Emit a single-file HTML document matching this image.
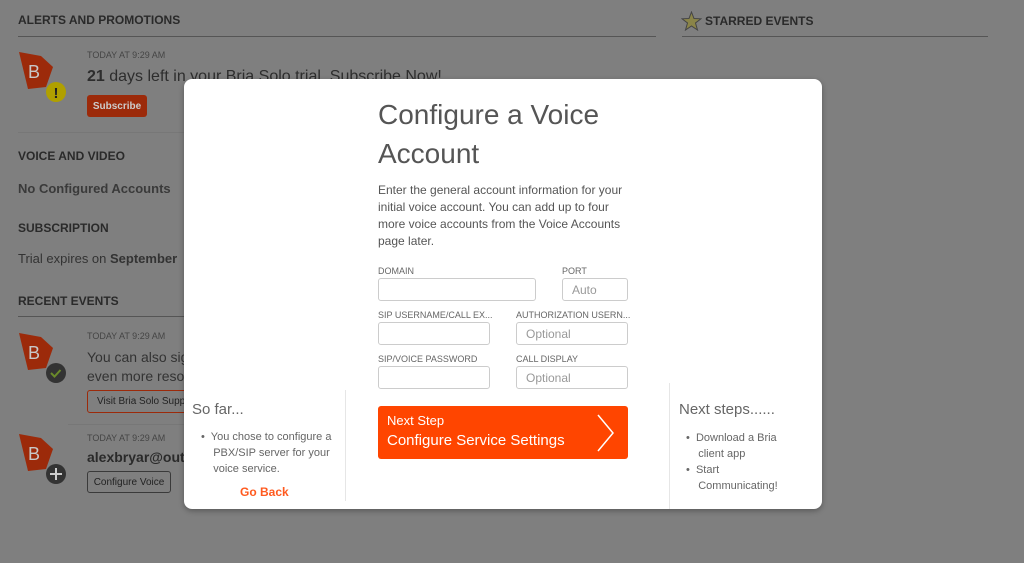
<!DOCTYPE html>
<html><head><meta charset="utf-8"><style>
*{margin:0;padding:0;box-sizing:border-box}
body{width:1024px;height:563px;background:#7f7f7f;font-family:"Liberation Sans",Arial,sans-serif;position:relative;overflow:hidden;color:#2d2d2d}
.a{position:absolute;white-space:nowrap}
.h{font-size:12px;font-weight:bold;color:#2a2a2a}
.line{position:absolute;height:1px;background:#555}
.ts{font-size:9px;color:#454545}
.btn{position:absolute;border:1px solid #3a3a3a;border-radius:3px;font-size:10px;color:#222;display:flex;align-items:center;justify-content:center;white-space:nowrap;overflow:hidden}
.modal{position:absolute;left:184px;top:79px;width:638px;height:430px;background:#fff;border-radius:8px;box-shadow:0 2px 6px rgba(0,0,0,.3)}
.m{position:absolute;white-space:nowrap}
.lbl{font-size:9px;color:#666}
.in{position:absolute;border:1px solid #ccc;border-radius:3px;height:23px;font-size:12px;color:#999;padding:4px 0 0 9px}
</style></head><body>
<div class="a h" style="left:18px;top:13px">ALERTS AND PROMOTIONS</div>
<div class="line" style="left:18px;top:36px;width:638px"></div>
<svg class="a" style="left:681px;top:11px" width="21" height="20" viewBox="0 0 21 20"><polygon points="10.5,1 13,7.5 20,7.8 14.5,12 16.5,19 10.5,15 4.5,19 6.5,12 1,7.8 8,7.5" fill="#8a8448" stroke="#444" stroke-width="1"/></svg>
<div class="a h" style="left:705px;top:14px">STARRED EVENTS</div>
<div class="line" style="left:682px;top:36px;width:306px"></div>

<svg class="a" style="left:16px;top:50px" width="54" height="54"><polygon points="3,2 25,6 37,17 30,37 12,39" fill="#9c2a0a"/><text x="12" y="28" font-family="Liberation Sans" font-size="18" fill="#c8c8c8">B</text><circle cx="40" cy="42" r="10" fill="#b0a000"/><text x="37.5" y="48" font-family="Liberation Sans" font-weight="bold" font-size="15" fill="#222">!</text></svg>
<div class="a ts" style="left:87px;top:50px">TODAY AT 9:29 AM</div>
<div class="a" style="left:87px;top:68px;font-size:16px;color:#2d2d2d"><b>21</b> days left in your Bria Solo trial. Subscribe Now!</div>
<div class="a" style="left:87px;top:95px;width:60px;height:22px;background:#9c2a0a;border-radius:3px;color:#ccc;font-size:10px;font-weight:bold;display:flex;align-items:center;justify-content:center">Subscribe</div>
<div class="line" style="left:18px;top:132px;width:170px;background:#777"></div>
<div class="a h" style="left:18px;top:149px">VOICE AND VIDEO</div>
<div class="a" style="left:18px;top:181px;font-size:13px;font-weight:bold;color:#3a3a3a">No Configured Accounts</div>
<div class="a h" style="left:18px;top:221px">SUBSCRIPTION</div>
<div class="a" style="left:18px;top:251px;font-size:13px;color:#333">Trial expires on <b>September</b></div>
<div class="a h" style="left:18px;top:294px">RECENT EVENTS</div>
<div class="line" style="left:18px;top:316px;width:170px"></div>

<svg class="a" style="left:16px;top:331px" width="54" height="54"><polygon points="3,2 25,6 37,17 30,37 12,39" fill="#9c2a0a"/><text x="12" y="28" font-family="Liberation Sans" font-size="18" fill="#c8c8c8">B</text><circle cx="40" cy="42" r="10" fill="#333"/><path d="M35,42 l3.5,3.5 l6,-6.5" stroke="#6a8a2a" stroke-width="2" fill="none"/></svg>
<div class="a ts" style="left:87px;top:331px">TODAY AT 9:29 AM</div>
<div class="a" style="left:87px;top:348px;font-size:14px;color:#333;line-height:19px">You can also sig<br>even more resou</div>
<div class="btn" style="left:87px;top:390px;width:110px;height:23px;border-color:#9c2a0a;justify-content:flex-start;padding-left:9px">Visit Bria Solo Support</div>
<div class="line" style="left:68px;top:424px;width:120px;background:#777"></div>
<svg class="a" style="left:16px;top:432px" width="54" height="54"><polygon points="3,2 25,6 37,17 30,37 12,39" fill="#9c2a0a"/><text x="12" y="28" font-family="Liberation Sans" font-size="18" fill="#c8c8c8">B</text><circle cx="40" cy="42" r="10" fill="#333"/><path d="M40,36 v12 M34,42 h12" stroke="#ccc" stroke-width="2"/></svg>
<div class="a ts" style="left:87px;top:433px">TODAY AT 9:29 AM</div>
<div class="a" style="left:87px;top:449px;font-size:14px;font-weight:bold;color:#2a2a2a">alexbryar@outlook.com</div>
<div class="btn" style="left:87px;top:471px;width:84px;height:22px">Configure Voice</div>

<div class="modal">
<div class="m" style="left:194px;top:16px;font-size:28px;color:#555;line-height:39px;white-space:normal;width:260px">Configure a Voice Account</div>
<div class="m" style="left:194px;top:103px;font-size:12px;color:#555;line-height:17px;white-space:normal;width:255px">Enter the general account information for your initial voice account. You can add up to four more voice accounts from the Voice Accounts page later.</div>
<div class="m lbl" style="left:194px;top:187px">DOMAIN</div>
<div class="m lbl" style="left:378px;top:187px">PORT</div>
<div class="in" style="left:194px;top:199px;width:158px"></div>
<div class="in" style="left:378px;top:199px;width:66px">Auto</div>
<div class="m lbl" style="left:194px;top:231px">SIP USERNAME/CALL EX...</div>
<div class="m lbl" style="left:332px;top:231px">AUTHORIZATION USERN...</div>
<div class="in" style="left:194px;top:243px;width:112px"></div>
<div class="in" style="left:332px;top:243px;width:112px">Optional</div>
<div class="m lbl" style="left:194px;top:275px">SIP/VOICE PASSWORD</div>
<div class="m lbl" style="left:332px;top:275px">CALL DISPLAY</div>
<div class="in" style="left:194px;top:287px;width:112px"></div>
<div class="in" style="left:332px;top:287px;width:112px">Optional</div>
<div class="m" style="left:194px;top:327px;width:250px;height:53px;background:#ff4500;border-radius:3px"></div>
<div class="m" style="left:203px;top:334px;font-size:13px;color:#fff">Next Step</div>
<div class="m" style="left:203px;top:353px;font-size:15px;color:#fff">Configure Service Settings</div>
<svg class="m" style="left:412px;top:335px" width="20" height="38"><path d="M2,1 L17,19 L2,37" stroke="#fff" stroke-width="1.5" fill="none"/></svg>

<div class="m" style="left:161px;top:311px;width:1px;height:111px;background:#e6e6e6"></div>
<div class="m" style="left:8px;top:322px;font-size:15px;color:#666">So far...</div>
<div class="m" style="left:17px;top:350px;font-size:11px;color:#666;line-height:16px">•&nbsp; You chose to configure a<br>&nbsp;&nbsp;&nbsp; PBX/SIP server for your<br>&nbsp;&nbsp;&nbsp; voice service.</div>
<div class="m" style="left:56px;top:406px;font-size:12px;font-weight:bold;color:#ff5a1f">Go Back</div>

<div class="m" style="left:485px;top:304px;width:1px;height:126px;background:#e6e6e6"></div>
<div class="m" style="left:495px;top:322px;font-size:15px;color:#666">Next steps......</div>
<div class="m" style="left:502px;top:351px;font-size:11px;color:#666;line-height:16px">•&nbsp; Download a Bria<br>&nbsp;&nbsp;&nbsp; client app<br>•&nbsp; Start<br>&nbsp;&nbsp;&nbsp; Communicating!</div>
</div>
</body></html>
